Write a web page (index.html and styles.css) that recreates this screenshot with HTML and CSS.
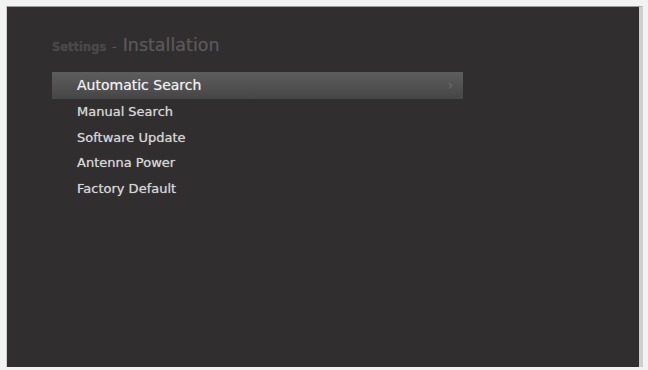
FILE: index.html
```html
<!DOCTYPE html>
<html lang="en">
<head>
  <meta charset="UTF-8">
  <meta name="viewport" content="width=device-width, initial-scale=1.0">
  <title>Settings - Installation</title>
  <link rel="stylesheet" href="styles.css">
</head>
<body>
  <div class="screen">
    <h1 class="title"><span class="crumb">Settings</span><span class="dash">-</span>Installation</h1>
    <ul class="menu">
      <li class="item selected">Automatic Search<span class="arrow">&rsaquo;</span></li>
      <li class="item">Manual Search</li>
      <li class="item">Software Update</li>
      <li class="item">Antenna Power</li>
      <li class="item">Factory Default</li>
    </ul>
  </div>
</body>
</html>
```

FILE: styles.css
```css
body { margin: 0; padding: 6px 5px 2px 6px; background: #f2f2f2; font-family: "DejaVu Sans", sans-serif; }
.screen {
  height: 361px;
  background: #302e2f;
  border-top: 1px solid #9a9a9a;
  border-right: 4px solid #cfcfcf;
  border-left: 1px solid #cfcfcf;
  padding: 0 0 0 45px;
  box-sizing: border-box;
}
.title {
  margin: 0;
  padding-top: 28px;
  height: 65px;
  box-sizing: border-box;
  font-size: 17.5px;
  font-weight: normal;
  color: #5a585a;
  text-shadow: 0 0 1px rgba(90, 88, 90, 0.6);
}
.crumb { font-size: 11.5px; font-weight: bold; color: #4a4849; }
.dash { font-size: 12px; margin: 0 6px 0 6px; }
.menu { list-style: none; margin: 0; padding: 0; width: 411px; }
.item {
  height: 25.5px;
  line-height: 25.5px;
  padding-left: 25px;
  font-size: 13px;
  color: #d6d6d6;
  text-shadow: 0 0 1px rgba(214, 214, 214, 0.7);
}
.selected {
  height: 27px;
  line-height: 27px;
  background: linear-gradient(#5e5d5e, #474647);
  color: #f0f0f0;
  font-size: 14px;
  display: flex;
  justify-content: space-between;
  padding-right: 10px;
}
.arrow { color: #6a696a; font-size: 14px; text-shadow: none; }
```
